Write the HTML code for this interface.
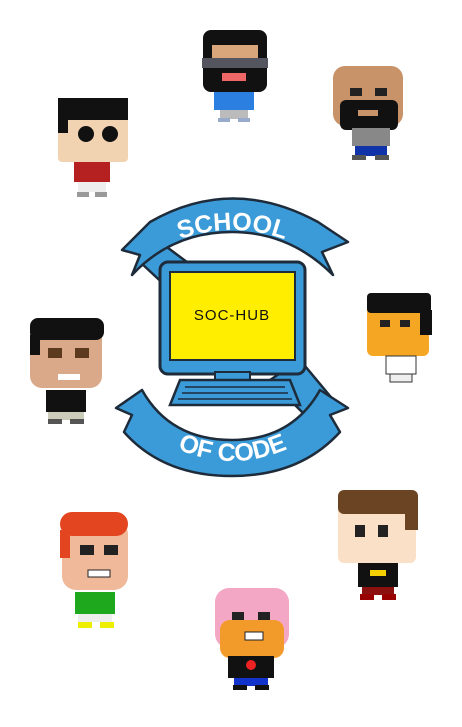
<!DOCTYPE html>
<html><head><meta charset="utf-8"><style>
html,body{margin:0;padding:0;background:#fff;}
svg{display:block;}
</style></head><body>
<svg width="462" height="727" viewBox="0 0 462 727" xmlns="http://www.w3.org/2000/svg">
<rect width="462" height="727" fill="#fff"/>
<defs>
<path id="arcTop" d="M160,248 Q232,212 305,248"/>
<path id="arcBot" d="M160,440 Q232,482 305,440"/>
</defs>
<g stroke="#1d2b3a" stroke-width="2.5" stroke-linejoin="round">
  <path d="M140,262 L160,242 L195,268 L170,290 Z" fill="#3b9bd8"/>
  <path d="M270,380 L300,360 L335,402 L310,420 Z" fill="#3b9bd8"/>
</g>
<g stroke="#1d2b3a" stroke-width="2.5" stroke-linejoin="round">
  <path d="M122,250 L150,222 Q232,175 318,222 L348,242 L322,252 L333,275 Q290,232 232,232 Q172,232 132,275 L140,255 Z" fill="#3b9bd8"/>
  <path d="M116,408 L142,390 Q170,440 232,440 Q292,440 320,390 L348,408 L330,415 L340,432 Q300,476 232,476 Q163,476 124,432 L132,415 Z" fill="#3b9bd8"/>
</g>
<rect x="160" y="262" width="145" height="112" rx="8" fill="#3b9bd8" stroke="#1d2b3a" stroke-width="3"/>
<rect x="170" y="272" width="125" height="88" fill="#ffee00" stroke="#1d2b3a" stroke-width="2"/>
<rect x="215" y="372" width="35" height="10" fill="#3b9bd8" stroke="#1d2b3a" stroke-width="2"/>
<path d="M180,380 L290,380 L300,405 L170,405 Z" fill="#3b9bd8" stroke="#1d2b3a" stroke-width="2.5"/>
<g fill="none" stroke="#1d2b3a" stroke-width="1.5">
<path d="M185,387 H285 M182,393 H288 M178,399 H292"/>
</g>
<text x="232" y="320" text-anchor="middle" font-family="Liberation Sans, sans-serif" font-size="15" fill="#111" letter-spacing="1">SOC-HUB</text>
<text font-family="Liberation Sans, sans-serif" font-weight="bold" font-size="25" fill="#fff" text-anchor="middle"><textPath href="#arcTop" startOffset="50%">SCHOOL</textPath></text>
<text font-family="Liberation Sans, sans-serif" font-weight="bold" font-size="25" fill="#fff" text-anchor="middle"><textPath href="#arcBot" startOffset="50%">OF CODE</textPath></text>

<g>
<rect x="203" y="30" width="64" height="62" rx="8" fill="#111"/>
<rect x="212" y="45" width="46" height="22" fill="#d9a57a"/>
<rect x="202" y="58" width="66" height="10" fill="#55555f"/>
<rect x="222" y="73" width="24" height="8" fill="#e66"/>
<rect x="214" y="92" width="40" height="18" fill="#2a7fe0"/>
<rect x="220" y="110" width="28" height="9" fill="#bbb"/>
<rect x="218" y="118" width="12" height="4" fill="#9ac"/><rect x="238" y="118" width="12" height="4" fill="#9ac"/>
</g>
<g>
<rect x="333" y="66" width="70" height="60" rx="12" fill="#c9936a"/>
<rect x="340" y="100" width="58" height="30" rx="6" fill="#111"/>
<rect x="350" y="88" width="12" height="8" fill="#222"/><rect x="375" y="88" width="12" height="8" fill="#222"/>
<rect x="358" y="110" width="20" height="6" fill="#c9936a"/>
<rect x="352" y="128" width="38" height="18" fill="#888"/>
<rect x="355" y="146" width="32" height="10" fill="#1133aa"/>
<rect x="352" y="155" width="14" height="5" fill="#555"/><rect x="375" y="155" width="14" height="5" fill="#555"/>
</g>
<g>
<rect x="58" y="100" width="70" height="62" rx="4" fill="#f2d3b1"/>
<rect x="58" y="98" width="70" height="22" fill="#111"/>
<rect x="58" y="118" width="10" height="15" fill="#111"/>
<circle cx="86" cy="134" r="8" fill="#111"/><circle cx="110" cy="134" r="8" fill="#111"/>
<rect x="74" y="162" width="36" height="20" fill="#b52020"/>
<rect x="78" y="182" width="28" height="10" fill="#eee"/>
<rect x="77" y="192" width="12" height="5" fill="#999"/><rect x="95" y="192" width="12" height="5" fill="#999"/>
</g>
<g>
<rect x="367" y="300" width="62" height="56" rx="6" fill="#f5a623"/>
<rect x="367" y="293" width="64" height="20" rx="4" fill="#111"/>
<rect x="420" y="310" width="12" height="25" fill="#111"/>
<rect x="380" y="320" width="10" height="7" fill="#222"/><rect x="400" y="320" width="10" height="7" fill="#222"/>
<rect x="386" y="356" width="30" height="18" fill="#fff" stroke="#333"/>
<rect x="390" y="374" width="22" height="8" fill="#eee" stroke="#333"/>
</g>
<g>
<rect x="30" y="322" width="72" height="66" rx="12" fill="#d9a98a"/>
<rect x="30" y="318" width="74" height="22" rx="8" fill="#111"/>
<rect x="30" y="335" width="10" height="20" fill="#111"/>
<rect x="48" y="348" width="14" height="10" fill="#5b3a1e"/><rect x="75" y="348" width="14" height="10" fill="#5b3a1e"/>
<rect x="58" y="374" width="22" height="6" fill="#fff"/>
<rect x="46" y="390" width="40" height="22" fill="#111"/>
<rect x="48" y="412" width="36" height="8" fill="#ccb"/>
<rect x="48" y="419" width="14" height="5" fill="#555"/><rect x="70" y="419" width="14" height="5" fill="#555"/>
</g>
<g>
<rect x="338" y="495" width="78" height="68" rx="6" fill="#fbe0c8"/>
<rect x="338" y="490" width="80" height="24" rx="6" fill="#6b4423"/>
<rect x="405" y="505" width="13" height="25" fill="#6b4423"/>
<rect x="355" y="525" width="10" height="12" fill="#222"/><rect x="378" y="525" width="10" height="12" fill="#222"/>
<rect x="358" y="563" width="40" height="24" fill="#111"/>
<rect x="370" y="570" width="16" height="6" fill="#f5d000"/>
<rect x="362" y="587" width="32" height="8" fill="#8b1010"/>
<rect x="360" y="594" width="14" height="6" fill="#900"/><rect x="382" y="594" width="14" height="6" fill="#900"/>
</g>
<g>
<rect x="62" y="520" width="66" height="70" rx="14" fill="#f0b999"/>
<rect x="60" y="512" width="68" height="24" rx="12" fill="#e2451f"/>
<rect x="60" y="530" width="10" height="28" fill="#e2451f"/>
<rect x="80" y="545" width="14" height="10" fill="#222"/><rect x="104" y="545" width="14" height="10" fill="#222"/>
<rect x="88" y="570" width="22" height="7" fill="#fff" stroke="#222"/>
<rect x="75" y="592" width="40" height="22" fill="#1ea81e"/>
<rect x="78" y="614" width="34" height="8" fill="#eee"/>
<rect x="78" y="622" width="14" height="6" fill="#ee0"/><rect x="100" y="622" width="14" height="6" fill="#ee0"/>
</g>
<g>
<rect x="215" y="588" width="74" height="60" rx="14" fill="#f4a7c4"/>
<rect x="220" y="620" width="64" height="38" rx="10" fill="#f29b2a"/>
<rect x="232" y="612" width="12" height="8" fill="#222"/><rect x="258" y="612" width="12" height="8" fill="#222"/>
<rect x="245" y="632" width="18" height="8" fill="#fff" stroke="#222"/>
<rect x="228" y="656" width="46" height="22" fill="#111"/>
<circle cx="251" cy="665" r="5" fill="#e22"/>
<rect x="234" y="678" width="34" height="8" fill="#1133cc"/>
<rect x="233" y="685" width="14" height="5" fill="#111"/><rect x="255" y="685" width="14" height="5" fill="#111"/>
</g>
</svg>
</body></html>
